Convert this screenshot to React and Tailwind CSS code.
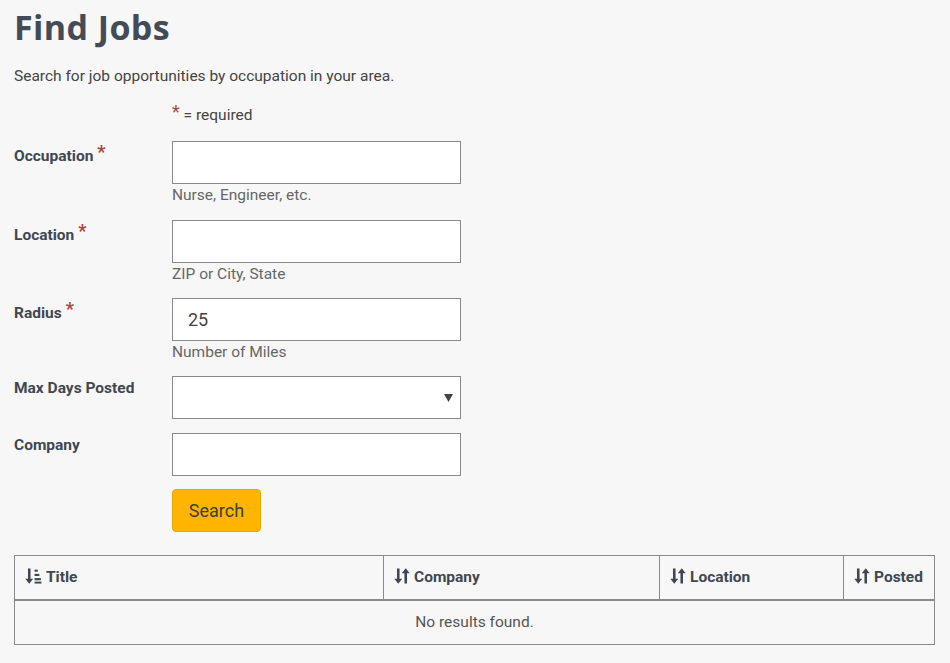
import React, { useState } from 'react';

const Star = () => <span className="text-[#a8453d] text-[18px] leading-none relative -top-[3px] ml-[4px]">*</span>;

const SortBoth = () => (
    <svg width="16" height="16" viewBox="0 0 15 15" className="inline-block mr-[4px] -mt-[3px]" fill="#3f4752">
        <path d="M2.8 0.5h2.4v9.5h2.5L4 14.8 0.3 10h2.5z" />
        <path d="M9.8 14.5h2.4V5h2.5L11 0.2 7.3 5h2.5z" />
    </svg>
);

const SortAmount = () => (
    <svg width="17" height="16" viewBox="0 0 16 15" className="inline-block mr-[4px] -mt-[3px]" fill="#3f4752">
        <path d="M2.8 0.5h2.4v9.5h2.5L4 14.8 0.3 10h2.5z" />
        <rect x="9" y="1.5" width="3" height="2" />
        <rect x="9" y="5.5" width="4.5" height="2" />
        <rect x="9" y="9.5" width="6" height="2" />
        <rect x="9" y="12.8" width="6.5" height="1.8" />
    </svg>
);

const Field = ({ label, required, help, children }) => (
    <div className="flex">
        <div className={(required ? "pt-[4px]" : "pt-[1px]") + " w-[158px] text-[15.5px] font-bold text-[#3f4752]"}>
            {label}
            {required && <Star />}
        </div>
        <div>
            {children}
            {help && <div className="text-[15.5px] text-[#666] leading-[18px] mt-[2px]">{help}</div>}
        </div>
    </div>
);

const inputCls = "w-[289px] h-[43px] border border-[#8a8a8a] bg-white px-[15px] text-[18px] text-[#444] focus:outline-none";

export default function App() {
    const [occupation, setOccupation] = useState('');
    const [location, setLocation] = useState('');
    const [radius, setRadius] = useState('25');
    const [company, setCompany] = useState('');

    return (
        <div className="min-h-[663px] bg-[#f7f7f7] px-[14px] pt-[6px] font-['Roboto',sans-serif] text-[#444]">
            <h1 className="font-['Open_Sans',sans-serif] font-bold text-[34px] text-[#434c56] leading-[42px] tracking-[0.4px]">Find Jobs</h1>
            <p className="text-[15.5px] mt-[17px] leading-[22px] text-[#444]">Search for job opportunities by occupation in your area.</p>

            <div className="ml-[158px] mt-[17px] text-[15.5px] leading-[22px]">
                <span className="text-[#a8453d] text-[18px] leading-none relative -top-[2px]">*</span> = required
            </div>

            <div className="mt-[15px] flex flex-col gap-[15px]">
                <Field label="Occupation" required help="Nurse, Engineer, etc.">
                    <input className={inputCls} value={occupation} onChange={(e) => setOccupation(e.target.value)} />
                </Field>
                <div className="mt-[1px]">
                    <Field label="Location" required help="ZIP or City, State">
                        <input className={inputCls} value={location} onChange={(e) => setLocation(e.target.value)} />
                    </Field>
                </div>
                <Field label="Radius" required help="Number of Miles">
                    <input className={inputCls} value={radius} onChange={(e) => setRadius(e.target.value)} />
                </Field>
                <Field label="Max Days Posted">
                    <div className={inputCls + " flex items-center justify-end pr-[7px]"}>
                        <svg width="9" height="8" viewBox="0 0 9 8"><path d="M0 0h9L4.5 8z" fill="#444" /></svg>
                    </div>
                </Field>
                <div className="-mt-[1px]">
                    <Field label="Company">
                        <input className={inputCls} value={company} onChange={(e) => setCompany(e.target.value)} />
                    </Field>
                </div>
            </div>

            <div className="ml-[158px] mt-[13px]">
                <button className="w-[89px] h-[43px] rounded-[4px] bg-[#ffb400] border border-[#e8a700] text-[18px] text-[#3c4048]">
                    Search
                </button>
            </div>

            <table className="mt-[23px] w-[921px] border-collapse border border-[#8a8a8a] text-[15.5px]">
                <thead>
                    <tr className="h-[44px] border-b-[2px] border-[#8a8a8a] font-bold text-[#3f4752] text-left">
                        <th className="w-[369px] px-[10px] border-r border-[#8a8a8a]"><SortAmount />Title</th>
                        <th className="w-[276px] px-[10px] border-r border-[#8a8a8a]"><SortBoth />Company</th>
                        <th className="w-[184px] px-[10px] border-r border-[#8a8a8a]"><SortBoth />Location</th>
                        <th className="px-[10px]"><SortBoth />Posted</th>
                    </tr>
                </thead>
                <tbody>
                    <tr className="h-[45px]">
                        <td colSpan={4} className="text-center text-[#555]">No results found.</td>
                    </tr>
                </tbody>
            </table>
        </div>
    );
}
